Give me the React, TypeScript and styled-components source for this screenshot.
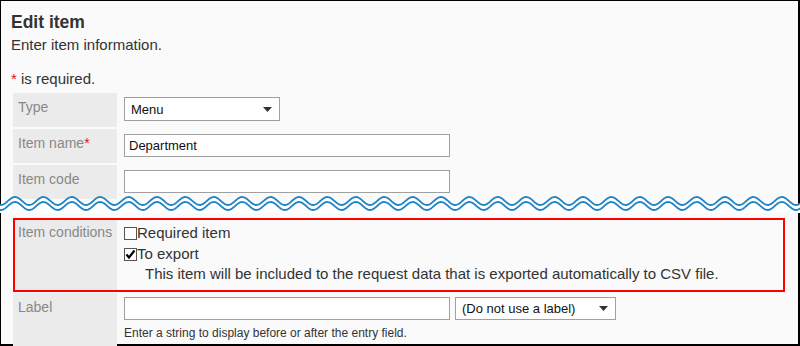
import styled, { createGlobalStyle } from "styled-components";

const GlobalStyle = createGlobalStyle`
  html, body {
    margin: 0;
    padding: 0;
    background: #fafafa;
  }
  body {
    font-family: "Liberation Sans", Arial, sans-serif;
    color: #333;
  }
`;

const Frame = styled.div`
  box-sizing: border-box;
  width: 800px;
  height: 346px;
  display: flex;
  flex-direction: column;
  background: #fafafa;
  border-style: solid;
  border-color: #000;
  border-width: 1px 2px 2px 1px;
  padding: 11px 0 0 10px;

  & > * {
    flex-shrink: 0;
  }
`;

const Title = styled.h1`
  margin: 0;
  font-size: 17.5px;
  line-height: 20px;
  font-weight: bold;
  color: #333;
`;

const Lead = styled.p`
  margin: 4px 0 0;
  font-size: 15px;
  line-height: 18px;
`;

const RequiredNote = styled.p`
  margin: 16px 0 0;
  font-size: 15px;
  line-height: 18px;
`;

const Star = styled.span`
  color: #e8101a;
`;

const Table = styled.div<{ $grow?: boolean }>`
  display: flex;
  flex-direction: column;
  gap: 2px;
  width: 772px;
  margin: 5px 0 0 2px;
  flex: ${({ $grow }) => ($grow ? "1 0 auto" : "none")};
`;

const Row = styled.div<{ $grow?: boolean }>`
  display: grid;
  grid-template-columns: 104px 1fr;
  min-height: 34px;
  flex: ${({ $grow }) => ($grow ? "1 0 auto" : "none")};
`;

const MarkedRow = styled(Row)`
  position: relative;
  min-height: 74px;
  margin-bottom: -1px;

  &::after {
    content: "";
    position: absolute;
    inset: 0;
    border: 2px solid #f00;
    pointer-events: none;
  }
`;

const LabelCell = styled.div`
  background: #ebebeb;
  color: #888;
  font-size: 14px;
  line-height: 18px;
  padding: 5px 0 5px 5px;
  white-space: nowrap;
`;

const ValueCell = styled.div<{ $top?: number }>`
  padding: ${({ $top }) => $top ?? 4}px 7px 6px;
  font-size: 15px;
`;

const Line = styled.div`
  display: flex;
  align-items: flex-start;
  gap: 5px;
`;

const TextInput = styled.div<{ $width: number }>`
  box-sizing: border-box;
  width: ${({ $width }) => $width}px;
  height: 23px;
  border: 1px solid #a0a0a0;
  background: #fff;
  font-size: 13px;
  line-height: 21px;
  color: #111;
  padding: 0 4px;
`;

const SelectBox = styled.div<{ $width: number; $height?: number }>`
  box-sizing: border-box;
  width: ${({ $width }) => $width}px;
  height: ${({ $height }) => $height ?? 23}px;
  border: 1px solid #a0a0a0;
  background: #fff;
  display: flex;
  align-items: center;
  justify-content: space-between;
  padding: 0 7px 0 6px;
  font-size: 13px;
  color: #111;
`;

const CheckLine = styled.label`
  display: flex;
  align-items: flex-start;
  font-size: 15px;
  line-height: 21px;
  color: #333;
`;

const Box = styled.span`
  box-sizing: border-box;
  width: 13px;
  height: 13px;
  margin-top: 5px;
  border: 1px solid #555;
  background: #fff;
  display: flex;
  align-items: center;
  justify-content: center;
`;

const Description = styled.div`
  font-size: 15px;
  line-height: 20px;
  padding-left: 21px;
  color: #333;
`;

const Hint = styled.div`
  margin-top: 5px;
  font-size: 12px;
  line-height: 16px;
  color: #333;
`;

const WaveStrip = styled.svg`
  display: block;
  width: 800px;
  height: 18px;
  margin: -4px 0 0 -11px;
  position: relative;
`;

function Arrow() {
  return (
    <svg width="9" height="5" viewBox="0 0 9 5">
      <path d="M0 0 H9 L4.5 5 Z" fill="#333" />
    </svg>
  );
}

function Check({ checked }: { checked?: boolean }) {
  return (
    <Box>
      {checked && (
        <svg width="11" height="11" viewBox="0 0 11 11">
          <path d="M1.5 5.5 L4 8.5 L9.5 1.5" fill="none" stroke="#000" strokeWidth="2.2" />
        </svg>
      )}
    </Box>
  );
}

function wavePath(center: number) {
  const period = 28.4;
  let d = "";
  for (let x = -2; x <= 802; x += 1) {
    const y = center - 4 * Math.cos((2 * Math.PI * (x - 15)) / period);
    d += `${x === -2 ? "M" : "L"}${x} ${y.toFixed(2)} `;
  }
  return d;
}

function Wave() {
  const top = wavePath(6);
  const bottom = wavePath(11);
  return (
    <WaveStrip width="800" height="18" viewBox="0 0 800 18" preserveAspectRatio="none">
      <path d={`${top} L802 18 L-2 18 Z`} fill="#fff" />
      <path d={top} fill="none" stroke="#1f84c6" strokeWidth="1.8" />
      <path d={bottom} fill="none" stroke="#1f84c6" strokeWidth="1.8" />
    </WaveStrip>
  );
}

export default function App() {
  return (
    <>
      <GlobalStyle />
      <Frame>
        <Title>Edit item</Title>
        <Lead>Enter item information.</Lead>
        <RequiredNote>
          <Star>*</Star> is required.
        </RequiredNote>

        <Table>
          <Row>
            <LabelCell>Type</LabelCell>
            <ValueCell>
              <SelectBox $width={156} $height={24}>
                Menu
                <Arrow />
              </SelectBox>
            </ValueCell>
          </Row>
          <Row>
            <LabelCell>
              Item name<Star>*</Star>
            </LabelCell>
            <ValueCell $top={5}>
              <TextInput $width={326}>Department</TextInput>
            </ValueCell>
          </Row>
          <Row>
            <LabelCell>Item code</LabelCell>
            <ValueCell $top={5}>
              <TextInput $width={326} />
            </ValueCell>
          </Row>
        </Table>

        <Wave />

        <Table $grow>
          <MarkedRow>
            <LabelCell>Item conditions</LabelCell>
            <ValueCell>
              <CheckLine>
                <Check />
                Required item
              </CheckLine>
              <CheckLine>
                <Check checked />
                To export
              </CheckLine>
              <Description>
                This item will be included to the request data that is exported automatically to CSV file.
              </Description>
            </ValueCell>
          </MarkedRow>
          <Row $grow>
            <LabelCell>Label</LabelCell>
            <ValueCell>
              <Line>
                <TextInput $width={326} />
                <SelectBox $width={161}>
                  (Do not use a label)
                  <Arrow />
                </SelectBox>
              </Line>
              <Hint>Enter a string to display before or after the entry field.</Hint>
            </ValueCell>
          </Row>
        </Table>
      </Frame>
    </>
  );
}
